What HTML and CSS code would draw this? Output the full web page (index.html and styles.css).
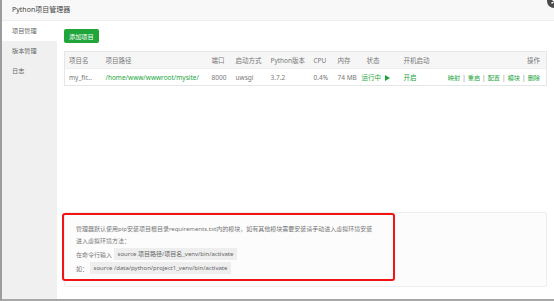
FILE: index.html
```html
<!DOCTYPE html>
<html>
<head>
    <meta charset="utf-8">
    <title>Python项目管理器</title>
    <link rel="stylesheet" href="styles.css">
</head>
<body>
    <div class="layer">
        <div class="layer-title">Python项目管理器</div>
        <span class="layer-close">
            <svg width="14" height="14" viewBox="0 0 14 14"><circle cx="7" cy="7" r="7" fill="#4a4a4a"/><path d="M4.5 4.5l5 5M9.5 4.5l-5 5" stroke="#fff" stroke-width="1.4"/></svg>
        </span>
        <div class="layer-body">
            <ul class="side-menu">
                <li class="active">项目管理</li>
                <li>版本管理</li>
                <li>日志</li>
            </ul>
            <div class="main">
                <button class="btn-add">添加项目</button>
                <table class="project-table">
                    <colgroup>
                        <col style="width:41px"><col style="width:106px"><col style="width:24px"><col style="width:35px"><col style="width:43px"><col style="width:24px"><col style="width:24px"><col style="width:42px"><col style="width:44px"><col>
                    </colgroup>
                    <thead>
                        <tr>
                            <th>项目名</th>
                            <th>项目路径</th>
                            <th>端口</th>
                            <th>启动方式</th>
                            <th>Python版本</th>
                            <th>CPU</th>
                            <th>内存</th>
                            <th class="status-head">状态</th>
                            <th>开机启动</th>
                            <th class="ops">操作</th>
                        </tr>
                    </thead>
                    <tbody>
                        <tr>
                            <td>my_fir...</td>
                            <td><a class="green">/home/www/wwwroot/mysite/</a></td>
                            <td>8000</td>
                            <td>uwsgi</td>
                            <td>3.7.2</td>
                            <td>0.4%</td>
                            <td>74 MB</td>
                            <td class="green">运行中 <svg class="play" width="5" height="6" viewBox="0 0 5 6"><path d="M0 0L5 3L0 6Z" fill="#20a53a"/></svg></td>
                            <td class="green">开启</td>
                            <td class="ops">
                                <a class="green">映射</a><span class="sep">|</span><a class="green">重启</a><span class="sep">|</span><a class="green">配置</a><span class="sep">|</span><a class="green">模块</a><span class="sep">|</span><a class="green">删除</a>
                            </td>
                        </tr>
                    </tbody>
                </table>

                <div class="help-box">
                    <div class="mark"></div>
                    <div class="line">管理器默认使用pip安装项目根目录requirements.txt内的模块，如有其他模块需要安装请手动进入虚拟环境安装</div>
                    <div class="line">进入虚拟环境方法：</div>
                    <div class="cmd">在命令行输入 <code>source 项目路径/项目名_venv/bin/activate</code></div>
                    <div class="cmd">如： <code>source /data/python/project1_venv/bin/activate</code></div>
                </div>
            </div>
        </div>
    </div>
</body>
</html>
```

FILE: styles.css
```css
* {
    box-sizing: border-box;
}

body {
    margin: 0;
    font-family: 'Noto Sans', 'Noto Sans CJK SC', sans-serif;
    font-size: 6.5px;
    color: #777;
    background: #fff;
}

.layer {
    position: relative;
    height: 301px;
    display: flex;
    flex-direction: column;
    border-left: 2px solid #9c9c9c;
    border-bottom: 2px solid #a8a8a8;
    overflow: hidden;
}

.layer-title {
    height: 21px;
    line-height: 20px;
    padding-left: 10px;
    background: #f8f8f8;
    border-bottom: 1px solid #eee;
    font-size: 7px;
    color: #444;
}

.layer-close {
    position: absolute;
    top: -6px;
    right: -7px;
}

.layer-close svg {
    display: block;
}

.layer-body {
    flex: 1;
    display: flex;
}

.side-menu {
    width: 55px;
    margin: 0;
    padding: 0;
    list-style: none;
    background: #f0f0f0;
}

.side-menu li {
    height: 20px;
    line-height: 20px;
    padding-left: 10px;
    font-size: 6.2px;
    color: #666;
}

.side-menu li.active {
    background: #fff;
}

.main {
    flex: 1;
    display: flex;
    flex-direction: column;
    align-items: flex-start;
    padding: 8px 7px 12px 7px;
}

.btn-add {
    height: 14px;
    padding: 0 5px;
    border: none;
    border-radius: 2px;
    background: #20a53a;
    color: #fff;
    font-family: inherit;
    font-size: 6.2px;
}

.project-table {
    width: 100%;
    margin-top: 8px;
    border-collapse: collapse;
    table-layout: fixed;
    border: 1px solid #e6e6e6;
}

.project-table th,
.project-table td {
    height: 17px;
    padding: 0;
    text-align: left;
    white-space: nowrap;
    font-weight: normal;
}

.project-table th {
    background: #f6f6f6;
    color: #777;
}

.project-table td {
    border-top: 1px solid #eee;
}

.project-table th:first-child,
.project-table td:first-child {
    padding-left: 4px;
}

.project-table .status-head {
    padding-left: 5px;
}

.project-table .ops {
    text-align: right;
    padding-right: 6px;
}

.green {
    color: #20a53a;
}

.play {
    margin-left: 2px;
    vertical-align: -0.5px;
}

.sep {
    margin: 0 2px;
    color: #888;
}

.ops a {
    font-size: 6.2px;
}

.help-box {
    position: relative;
    align-self: stretch;
    margin-top: auto;
    height: 75px;
    padding: 10px 11px;
    background: #fcfcfc;
    border: 1px solid #eee;
    border-radius: 2px;
    font-size: 6px;
}

.mark {
    position: absolute;
    left: -3px;
    top: 0;
    width: 333px;
    height: 68px;
    border: 2px solid #f21414;
    border-radius: 3px;
}

.line {
    line-height: 12px;
}

.cmd {
    height: 14px;
    display: flex;
    align-items: center;
    white-space: pre;
}

code {
    font-family: inherit;
    background: #eee;
    padding: 0 4px;
    line-height: 12px;
    color: #666;
}
```
